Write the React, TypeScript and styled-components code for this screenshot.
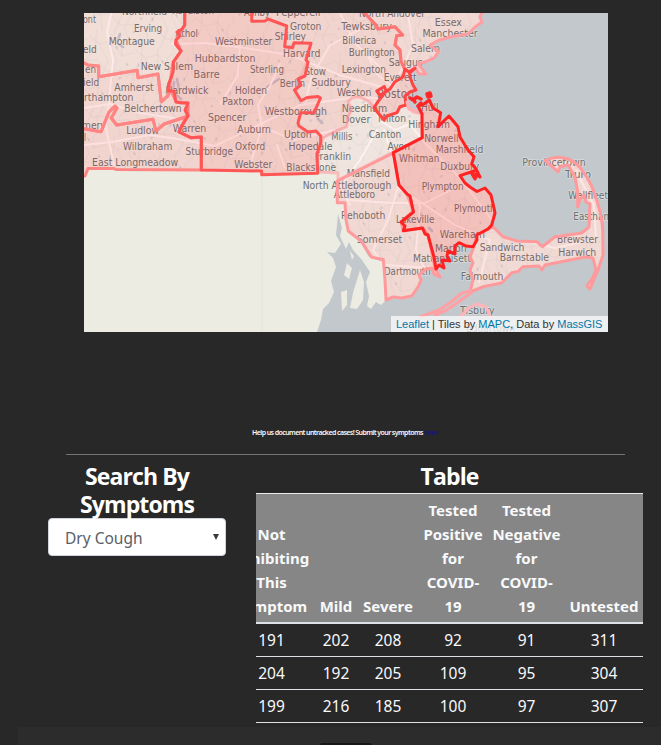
import React from "react";
import styled, { createGlobalStyle } from "styled-components";

const GlobalStyle = createGlobalStyle`
  * { box-sizing: border-box; }
  body { margin: 0; background: #282828; overflow: hidden; }
`;

const Page = styled.main`
  display: flex;
  flex-direction: column;
  width: 661px;
  height: 745px;
  overflow: hidden;
  padding-top: 13px;
  background: #282828;
  color: #f8f9fa;
  font-family: "Noto Sans", "Open Sans", sans-serif;
`;

const MapFrame = styled.section`
  position: relative;
  flex: none;
  width: 524px;
  height: 319px;
  margin-left: 84px;
  overflow: hidden;
  background: #c3c8cc;
`;

const MapCanvas = styled.svg`
  display: block;
  width: 524px;
  height: 319px;
`;

const Attribution = styled.div`
  position: absolute;
  right: 0;
  bottom: 0;
  width: 217px;
  height: 16px;
  padding-left: 5px;
  background: rgba(255, 255, 255, 0.7);
  color: #333;
  font: 11px/16px "Liberation Sans", Arial, sans-serif;
  white-space: nowrap;
`;

const MapLink = styled.a`
  color: #0078a8;
`;

const Notice = styled.p`
  flex: none;
  height: 12px;
  margin: 95px 0 0 252px;
  font-size: 7px;
  font-weight: 600;
  line-height: 12px;
  letter-spacing: -0.58px;
  white-space: nowrap;
`;

const NoticeLink = styled.a`
  color: #17177c;
`;

const Divider = styled.hr`
  flex: none;
  width: 559px;
  height: 1px;
  margin: 15px 0 0 66px;
  border: 0;
  background: #747474;
`;

const Columns = styled.div`
  display: grid;
  flex: none;
  grid-template-columns: 178px 387px;
  column-gap: 30px;
  height: 272px;
  padding: 7px 0 0 48px;
`;

const Heading = styled.h4<{ $lines: number }>`
  height: ${(p) => p.$lines * 28}px;
  margin: 0 0 ${(p) => (p.$lines === 1 ? 3 : 0)}px;
  font-family: "Open Sans", "Noto Sans", sans-serif;
  font-size: 23px;
  font-weight: 700;
  line-height: 28px;
  letter-spacing: -0.9px;
  text-align: center;
  color: #fff;
`;

const SelectBox = styled.div`
  display: flex;
  align-items: center;
  justify-content: space-between;
  height: 38px;
  padding: 2px 6px 0 16px;
  border: 1px solid #ced4da;
  border-radius: 4px;
  background: #fff;
  color: #596068;
  font-size: 15.5px;
`;

const Arrow = styled.svg`
  width: 6px;
  height: 6px;
  margin-top: -3px;
`;

const TableClip = styled.div`
  display: flex;
  justify-content: flex-end;
  width: 387px;
  overflow: hidden;
`;

const Table = styled.table`
  flex: none;
  width: 414px;
  table-layout: fixed;
  border-collapse: separate;
  border-spacing: 0;
  text-align: center;
  font-size: 16px;
  line-height: 24px;
`;

const Column = styled.col<{ $width: number }>`
  width: ${(p) => p.$width}px;
`;

const HeadCell = styled.th`
  height: 131px;
  padding: 4px 0;
  border-top: 1px solid #e9ecef;
  border-bottom: 2px solid #dee2e6;
  background: #868686;
  color: #f8f9fa;
  font-size: 15px;
  font-weight: 700;
  vertical-align: bottom;
`;

const HeadLine = styled.span`
  display: block;
  white-space: nowrap;
`;

const Cell = styled.td`
  height: 33px;
  padding: 4px 0;
  border-bottom: 1px solid #dee2e6;
  color: #f8f9fa;
  font-size: 15.5px;
`;

const Footer = styled.footer`
  display: flex;
  flex: none;
  align-items: flex-end;
  height: 18px;
  margin-left: 18px;
  padding-left: 302px;
  background: #2c2c2c;
`;

const FooterTab = styled.div`
  width: 52px;
  height: 2px;
  border-radius: 2px 2px 0 0;
  background: #171717;
`;

type Label = [text: string, start: number, end: number, baseline: number];

const labels: Label[] = [
  ["Northfield", 122, 167, 15], ["ont", 83, 96, 23.3], ["Erving", 134, 162, 32],
  ["Montague", 108.7, 154.7, 44.7], ["eld", 83, 96.7, 52.7], ["en", 85, 96, 72.7],
  ["ield", 83, 99.3, 86], ["rthampton", 84, 133.5, 100.8], ["Amherst", 114.3, 153.7, 91.3],
  ["New Salem", 140.7, 193, 69.7], ["Belchertown", 124.3, 181.7, 112.3],
  ["Hardwick", 165.5, 208.3, 93.8], ["mery", 82, 105.7, 129], ["l", 84, 86, 140.5],
  ["Ludlow", 126.3, 159, 134], ["Warren", 172.7, 206.3, 132],
  ["Wilbraham", 123, 172.3, 149.8], ["East Longmeadow", 92, 178.3, 166.3],
  ["Athol", 175.5, 198, 37.3], ["Royalston", 172, 214, 13.5],
  ["Westminster", 215, 272.3, 45.3], ["Hubbardston", 194.8, 255.5, 62.3],
  ["Barre", 193.5, 219.6, 77.6], ["Sterling", 250, 284, 72.9], ["Berlin", 279.7, 305, 86.6],
  ["Holden", 235, 267, 93.6], ["Paxton", 222.3, 253.7, 104.6], ["Spencer", 208, 246.3, 120.5],
  ["Auburn", 237.3, 271, 132.6], ["Oxford", 235, 265.3, 149.6], ["Webster", 234.3, 272.3, 168.3],
  ["Sturbridge", 185.5, 233, 154.6], ["Westborough", 265, 327, 115.2],
  ["Upton", 284, 311.7, 137.6], ["Hopedale", 288.4, 332.6, 150.3],
  ["Blackstone", 286.3, 336, 171.2], ["Ashby", 244, 270, 15.5], ["Pepperell", 276, 320.4, 15.5],
  ["Groton", 290, 321.3, 29.7], ["Shirley", 274.7, 306, 40], ["Harvard", 283, 320.3, 56.6],
  ["Stow", 304.5, 326, 74.8], ["Sudbury", 311.5, 350.8, 86.3], ["North Andover", 359, 425, 16.5],
  ["Tewksbury", 341.3, 392, 30.3], ["Billerica", 342.3, 376.3, 43.6],
  ["Burlington", 348.7, 394.7, 55.6], ["Lexington", 341.7, 386, 72.6],
  ["Weston", 337, 371.3, 96], ["Saugus", 388.7, 422.7, 65.7], ["Everett", 383.7, 416.7, 81.3],
  ["Needham", 341.7, 387.3, 112.2], ["Dover", 342, 370.3, 122.7], ["Milton", 378, 406, 121.8],
  ["Millis", 331.3, 352.3, 139.6], ["Canton", 368.7, 401.3, 138], ["Hull", 421, 438.5, 111],
  ["Hingham", 408.3, 450, 128], ["Norwell", 424.3, 458.5, 142],
  ["Marshfield", 435.7, 483.3, 153], ["Duxbury", 440.3, 479, 170],
  ["Whitman", 399, 439.3, 161.6], ["Avon", 387.4, 410, 149.8], ["Plympton", 421.7, 463.7, 190],
  ["Plymouth", 454, 495.7, 211.6], ["Essex", 434.7, 462, 25.7], ["Manchester", 422.4, 477.7, 37.4],
  ["Salem", 411, 440, 52.3], ["Franklin", 315, 351, 160], ["Mansfield", 346.7, 390, 177.2],
  ["North Attleborough", 302.7, 391.3, 188.5], ["Attleboro", 333.7, 375, 198.2],
  ["Rehoboth", 341, 385.3, 219.4], ["Somerset", 356.7, 402.3, 242.5],
  ["Lakeville", 396, 434.3, 222.6], ["Wareham", 439.7, 485, 237.6], ["Marion", 435, 466.7, 252.3],
  ["Mattapoisett", 413, 471, 262], ["Dartmouth", 384, 430.7, 275],
  ["Falmouth", 460.7, 503.3, 280.3], ["Tisbury", 460, 494.7, 314.3], ["Edgartown", 466, 515, 332],
  ["Sandwich", 479.7, 524.3, 251.3], ["Barnstable", 499.7, 549, 261.2],
  ["Brewster", 557, 598, 243], ["Harwich", 558.3, 596.3, 255.6],
  ["Provincetown", 522.3, 585.7, 166], ["Truro", 565, 591, 178.3],
  ["Wellfleet", 568.3, 608, 199], ["Eastham", 573.3, 612, 219.6],
];

type Shape = { d: string; color: string; tint: number; line?: number };

const WORCESTER =
  "M184.7 10V25L182 29L177 32L180 36L176 40L175.5 44L181 51L173.5 62L173 72L171 78L168.5 84L168 91L174 91L176 102L182 103L188 103L185 110L188 116L180 129L179 132L190.7 137.7L201.3 137V170L261.7 171V174.7L317.7 173.3L317 154L320.7 143V136L316 131L308 132L299 126L298 123L300.7 112.7L314 112.7L320.5 98L318 96.5L307 97.5L301 100.7L294.5 90L301 85L298 79L305 76L308 62L306 60L311 43.3L294 42.7L292.7 47.7L284.7 46.7L286.7 26L268 19L265 21L251.7 21.3V10";
const SUFFOLK =
  "M415 68.3L409.5 73L410.7 79L413 85L416 90L410 92L405 96L406 105L400 106.7L397 112.7L387 116L384 120L379 114L374 107.7L378 101.7L386 91L384.3 86.5L376.7 91L380 95.5L390 89L395 81.7L403 77L405 69L409 72Z";
const PLYMOUTH =
  "M393.3 152.7L422.3 137.7L422 124L422 114L418 106L424 104L429.3 100L433 108L440.7 112.7L438 126.7L449 116L458 126.7L460 137L468 150L474 156.7L471.7 164L476 169L480 177L476 174L475 179L472 174L474 171L460 175.7L465 183L470 187L477 191.5L485 188L491 195L494 208L495 213L491.7 225L488 229L476.7 235L477 240L473 246.7L466 246L459 242.7L455 246L455 254L448 251L447 256L450 261L442 260L444 268L439 265L436 269L434 257L428 235L425 234L422.5 228L403.3 230.7L405 226L401 222L413.5 212L410 196L407 194L399 185Z";
const CAPE =
  "M493 226.7L503 236.7L516.7 241L536.7 241.7L542.3 246.7L555 236.7L581.7 233L589 227L590 204L586 202L584 195L580 199L577.7 207L577.5 190L575 177L568 165L560 166.7L558 171.7L545 160.7Q556 155 568 159Q577 162 584 173Q592 184 596.7 200Q602 216 602.7 230L603 255L598 270L590 289L587 286L593 277L596 270L593 258L585 257L545 265L541.7 270L539 266L523 266.7L518 271.5L511.7 272.7L501.7 283L484 286.5L470 292L473 280L470 270L473 263L470 257L474 246.7L477 235Z";
const ESSEX =
  "M361.7 10L376 25L378 29L395 26.7L402.7 35L396.7 35.7L395 45L400 50L401 61L405 70L409 72L415 67L419 74L426 74L418 64L425 62L434 58L438.5 51.7L430 45L439 40L451 37L468 34L475 27L482 22L480 17L483 10Z";
const BRISTOL =
  "M337.3 181L393.3 153L399 185L407 194L413 211L401 222L403.3 230.7L422.5 228L428 235L435 268L440 277L434 274L432 268L426 269L419 275L421 280L418 287L411.7 296L401.7 298L393 297L386 300L385 280L383.3 259.5L371.7 257.3L361.7 241.7L348.3 231L346 220L345 202.7H337.3Z";
const NORFOLK =
  "M318 154L323 138L334 132L346.7 126.7L348 116L351.7 110L348 101.7L352 98L360 97L368 101L374 108L384 120L387 116L397 112.7L400 106.7L406 105L413 111.7L422 114V137.7L338 180V173L318 172Z";
const MIDDLESEX =
  "M251.7 10V21.3L265 21L268 19L286.7 26L284.7 46.7L294 42.7H311L306 60L298 79L294.5 90L301 100.7L320.5 98L314 112.7H300.7L298 123L308 132L316 131L321 139L346.7 126.7L351.7 110L348 101.7L355 97L368 101L374 108L378 101L376.7 91L390 87L405 70L401 61L400 50L395 45L396.7 35.7L402.7 35L395 26.7L378 29L361.7 10Z";
const FRANKLIN =
  "M80 61L88 65L98.7 66V76.7L137.3 70.3L138 77.7L158 74L161.3 101.7L168 96L173 62L181 51L176 40L184.7 25V8H80Z";
const HAMPSHIRE =
  "M80 61L88 65L98.7 66V76.7L137.3 70.3L138 77.7L158 74L161.3 102L168 95L171 91L176 102L188 103V116L164 124L156 131L153 119.3L116.7 125L111.3 118L117 108L115 106L109 112L101 131.7L80 128Z";
const HAMPDEN =
  "M80 128L101 131.7L109 112L115 106L117 108L111.3 118L116.7 125L153 119.3L156 131L164 124L186 117L179 132L190.7 137.7L201.3 137V170L116 169.5L114 168.5H88L85 176H80Z";

const counties: Shape[] = [
  { d: NORFOLK, color: "#ff9da2", tint: 0.01, line: 0.6 },
  { d: ESSEX, color: "#ff9ea2", tint: 0.08 },
  { d: FRANKLIN, color: "#ff8c8c", tint: 0.05 },
  { d: HAMPSHIRE, color: "#ff8989", tint: 0.09 },
  { d: HAMPDEN, color: "#ff8484", tint: 0.1 },
  { d: BRISTOL, color: "#ff999b", tint: 0.08 },
  { d: CAPE, color: "#ff9a9c", tint: 0.07 },
  { d: MIDDLESEX, color: "#ff7070", tint: 0.1, line: 0 },
  { d: "M361.7 10L376 25L378 29L395 26.7L402.7 35L396.7 35.7L395 45L400 50L401 61L405 70", color: "#ff7474", tint: 0 },
  { d: SUFFOLK, color: "#ff4444", tint: 0.14 },
  { d: WORCESTER, color: "#ff5555", tint: 0.15 },
  { d: PLYMOUTH, color: "#ff2222", tint: 0.2 },
];

const RHODE_ISLAND =
  "M80 165H340V202L345 203L346 221L349 231L360 242L369 257L383 262L386 300L381 305L376 302L371 309L367 306L369 296L366 282L370 272L362 260L353 250L349 242L346 249L340 236L342 228L338 214L336 235L341 244L335 253L327 252L333 258L336 267L331 281L334 292L329 303L323 309L321 320L317 332H80Z";
const RI_ISLANDS =
  "M360 270L364 282L363 300L357 309L350 308L353 293ZM341 292L347 290L347 305L342 311ZM347 263L352 268L349 279L344 275ZM350 251L354 256L352 260Z";

const highways = [
  "M112 10L107 32L113 60L109 100L106 128L114 165M84 145L112 142L150 135L178 139L215 146L250 129L300 105L350 98L390 98",
  "M84 108L110 104L140 113L185 120M172 44L205 43L245 48L290 55L340 75L385 88",
  "M262 127L258 105L270 86L280 64M262 127L250 165M277 145L285 168M262 127L295 140L335 130",
  "M305 105L311 78L330 45L375 22M340 13L355 43L395 82M400 93L377 74L365 50M393 88L413 45L408 15",
  "M374 100L379 120L395 130L410 124L424 142L460 178L488 215L505 236L555 248L596 239L594 205L576 171",
  "M377 130L360 160L340 187L350 205M384 130L400 181L388 220L373 250L384 265L430 268M398 188L428 207L455 225L490 240L479 282",
  "M400 184L420 206L416 250L425 270M348 200L393 203L425 203L461 185M220 104L238 75L240 45",
];

const minorRoads =
  "M0 8L12 13L23 6L37 18L48 11M5 0L9 17L4 31L11 48M21 0L25 14L34 24L31 38L39 48M0 34L14 29L26 37L42 31L48 35M12 13L25 27L23 48M37 18L33 7L38 0";

function MassMap() {
  return (
    <MapCanvas viewBox="84 13 524 319" fill="none" strokeLinejoin="round" strokeLinecap="round">
      <defs>
        <pattern id="roads" width="48" height="48" patternUnits="userSpaceOnUse" patternTransform="rotate(17)">
          <path d={minorRoads} stroke="#d3ccd0" strokeWidth="0.6" opacity="0.6" />
          <path d="M7 21l1 2M29 11l1 1M41 40l1-1M44 24l1 1" stroke="#b4b8c4" strokeWidth="1.3" opacity="0.7" />
        </pattern>
        <clipPath id="state">
          {counties.map((c, i) => <path key={i} d={c.d} />)}
        </clipPath>
      </defs>
      <path d={RHODE_ISLAND + RI_ISLANDS} fill="#ecece2" />
      <path d="M262 174V332" stroke="#e0e1dc" strokeWidth="0.7" />
      {counties.map((c, i) => <path key={i} d={c.d} fill="#f0e8e1" />)}
      <g clipPath="url(#state)">
        <path d="M84 13H608V332H84Z" fill="url(#roads)" />
        <path d="M174 82L173 92L181 99M177 79L179 89M267 87L276 81L279 79M315 110L318 119L322 123M120 34L117 43L123 47M420 213L423 218M429 228L432 231" stroke="#c1c3d0" strokeWidth="2.6" />
        {highways.map((d, i) => <path key={i} d={d} stroke="#fdf5f4" strokeWidth="1.9" />)}
      </g>
      <g fontFamily="DejaVu Sans, sans-serif" fontSize="10" fill="#6c6f70" stroke="#f2f0ea" strokeOpacity="0.5" strokeWidth="1.6" paintOrder="stroke">
        {labels.map(([text, start, end, y]) => (
          <text key={text + y} x={start} y={y} textLength={end - start} lengthAdjust="spacingAndGlyphs">{text}</text>
        ))}
        <text x="377" y="97.5" fontSize="12" textLength="37" lengthAdjust="spacingAndGlyphs">Boston</text>
      </g>
      {counties.map((c, i) => (
        <path key={i} d={c.d} fill="#ff2a2a" fillOpacity={c.tint} stroke={c.color} strokeOpacity={c.line ?? 1} strokeWidth={c.line === 0 ? 0 : 3} />
      ))}
      <path d="M410 98l3 2 4-3 4 2M413 99l2 3M427 94l3-1 1 3-3 1zM418 106l3-3M472 173l4 4" stroke="#ff2828" strokeWidth="3.5" />
      <path d="M407 102L409 109L416 111" stroke="#ffb0b4" strokeWidth="3" />
      <path d="M470 291L462 293L451 302L439 310L420 317M471 293L454 305L445 311L435 315" stroke="#ffa0a4" strokeWidth="3" />
      <path d="M461 316L469 308L477 304L486 307L490 316" stroke="#ffb4b8" strokeWidth="3" />
    </MapCanvas>
  );
}

const columns = [
  { width: 85, lines: ["Not", "Exhibiting", "This", "Symptom"] },
  { width: 44, lines: ["Mild"] },
  { width: 60, lines: ["Severe"] },
  { width: 70, lines: ["Tested", "Positive", "for", "COVID-", "19"] },
  { width: 77, lines: ["Tested", "Negative", "for", "COVID-", "19"] },
  { width: 78, lines: ["Untested"] },
];

const rows = [
  [191, 202, 208, 92, 91, 311],
  [204, 192, 205, 109, 95, 304],
  [199, 216, 185, 100, 97, 307],
];

export default function App() {
  return (
    <Page>
      <GlobalStyle />
      <MapFrame>
        <MassMap />
        <Attribution>
          <MapLink>Leaflet</MapLink> | Tiles by <MapLink>MAPC</MapLink>, Data by <MapLink>MassGIS</MapLink>
        </Attribution>
      </MapFrame>
      <Notice>
        Help us document untracked cases! Submit your symptoms <NoticeLink>here</NoticeLink>
      </Notice>
      <Divider />
      <Columns>
        <section>
          <Heading $lines={2}>Search By Symptoms</Heading>
          <SelectBox>
            Dry Cough
            <Arrow viewBox="0 0 7 7"><path d="M0 0H7L3.5 7Z" fill="#343a40" /></Arrow>
          </SelectBox>
        </section>
        <section>
          <Heading $lines={1}>Table</Heading>
          <TableClip>
            <Table>
              <colgroup>
                {columns.map((c, i) => <Column key={i} $width={c.width} />)}
              </colgroup>
              <thead>
                <tr>
                  {columns.map((c, i) => (
                    <HeadCell key={i}>
                      {c.lines.map((line) => <HeadLine key={line}>{line}</HeadLine>)}
                    </HeadCell>
                  ))}
                </tr>
              </thead>
              <tbody>
                {rows.map((row, i) => (
                  <tr key={i}>{row.map((value, j) => <Cell key={j}>{value}</Cell>)}</tr>
                ))}
              </tbody>
            </Table>
          </TableClip>
        </section>
      </Columns>
      <Footer><FooterTab /></Footer>
    </Page>
  );
}
